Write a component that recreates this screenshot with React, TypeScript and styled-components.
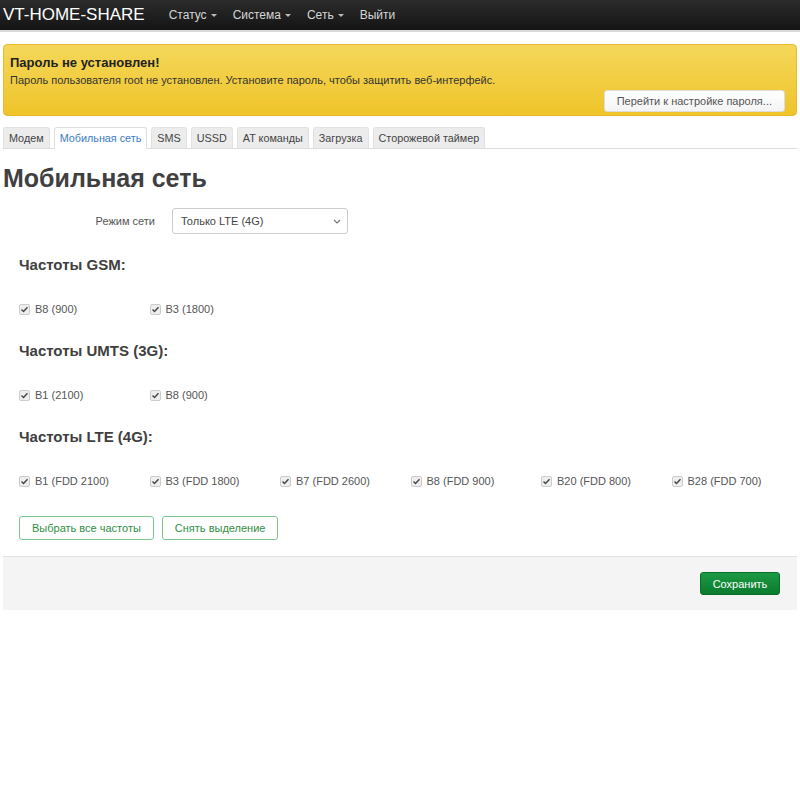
import React from "react";
import styled, { createGlobalStyle } from "styled-components";

const Global = createGlobalStyle`
  body {
    margin: 0;
    background: #fff;
    font-family: "Liberation Sans", Arial, sans-serif;
    color: #404040;
  }
`;

const Navbar = styled.div`
  height: 30px;
  background: linear-gradient(#2c2c2c, #141414);
  border-bottom: 2px solid #d8d8d8;
  display: flex;
  align-items: center;
  padding: 0 3px;
`;

const Brand = styled.span`
  font-size: 17px;
  color: #fff;
  margin-right: 24px;
`;

const Menu = styled.div`
  display: flex;
  gap: 16px;
`;

const MenuItem = styled.span<{ $drop?: boolean }>`
  font-size: 12px;
  color: #d6d6d6;
  display: flex;
  align-items: center;
  &::after {
    content: "";
    display: ${(p) => (p.$drop ? "inline-block" : "none")};
    margin-left: 4px;
    border-left: 3px solid transparent;
    border-right: 3px solid transparent;
    border-top: 3px solid #bbb;
  }
`;

const Page = styled.div`
  padding: 0 3px;
`;

const Alert = styled.div`
  margin-top: 12px;
  height: 72px;
  box-sizing: border-box;
  background: linear-gradient(#f4d75a, #efc42a);
  border: 1px solid #e6bc2a;
  border-radius: 4px;
  padding: 9px 6px 3px 6px;
  display: flex;
  flex-direction: column;
`;

const AlertTitle = styled.div`
  font-size: 13px;
  font-weight: bold;
  color: #222;
  line-height: 17px;
`;

const AlertText = styled.div`
  font-size: 11px;
  color: #333;
  margin-top: 3px;
`;

const AlertActions = styled.div`
  margin-top: auto;
  display: flex;
  justify-content: flex-end;
`;

const LightButton = styled.button`
  height: 22px;
  padding: 0 12px;
  white-space: nowrap;
  font-family: inherit;
  font-size: 11px;
  color: #555;
  background: linear-gradient(#fff, #f4f4f4);
  border: 1px solid #ddd;
  border-radius: 3px;
  margin-right: 5px;
`;

const Tabs = styled.div`
  margin-top: 11px;
  display: flex;
  gap: 4px;
  border-bottom: 1px solid #ddd;
  height: 21px;
`;

const Tab = styled.div<{ $active?: boolean }>`
  font-size: 10.8px;
  box-sizing: border-box;
  padding: 0 5px;
  display: flex;
  align-items: center;
  border: 1px solid ${(p) => (p.$active ? "#ddd" : "#e2e2e2")};
  border-bottom: ${(p) => (p.$active ? "1px solid #fff" : "none")};
  border-radius: 3px 3px 0 0;
  background: ${(p) => (p.$active ? "#fff" : "#ececec")};
  color: ${(p) => (p.$active ? "#3a7bc8" : "#444")};
  height: ${(p) => (p.$active ? "22px" : "21px")};
`;

const Title = styled.h2`
  margin: 14px 0 0 0;
  font-size: 25px;
  line-height: 30px;
  font-weight: bold;
  color: #404040;
`;

const FormRow = styled.div`
  display: flex;
  align-items: center;
  margin-top: 15px;
`;

const Label = styled.div`
  width: 152px;
  text-align: right;
  font-size: 11px;
  color: #555;
  padding-right: 17px;
`;

const Select = styled.div`
  width: 176px;
  height: 26px;
  box-sizing: border-box;
  border: 1px solid #ccc;
  border-radius: 3px;
  display: flex;
  align-items: center;
  justify-content: space-between;
  padding: 0 6px 0 8px;
  font-size: 11px;
  color: #444;
`;

const Section = styled.div`
  padding-left: 16px;
`;

const SectionTitle = styled.h3<{ $first?: boolean }>`
  margin: ${(p) => (p.$first ? "21px" : "22px")} 0 0 0;
  font-size: 15px;
  line-height: 20px;
  font-weight: bold;
  color: #404040;
`;

const Bands = styled.div`
  display: grid;
  grid-template-columns: repeat(6, 130.5px);
  margin-top: 24px;
  height: 20px;
  align-items: center;
`;

const Band = styled.label`
  display: flex;
  align-items: center;
  font-size: 11px;
  color: #555;
  gap: 5px;
`;

const Box = styled.span`
  width: 11px;
  height: 11px;
  box-sizing: border-box;
  border: 1px solid #ccc;
  border-radius: 2px;
  background: #eee;
  display: flex;
  align-items: center;
  justify-content: center;
`;

const Actions = styled.div`
  display: flex;
  gap: 8px;
  margin-top: 25px;
`;

const OutlineButton = styled.button`
  height: 24px;
  padding: 0 12px;
  font-family: inherit;
  font-size: 11px;
  color: #2f8f45;
  background: #fff;
  border: 1px solid #7cc78f;
  border-radius: 3px;
`;

const Footer = styled.div`
  margin-top: 16px;
  height: 54px;
  box-sizing: border-box;
  background: #f4f4f4;
  border-top: 1px solid #e2e2e2;
  display: flex;
  justify-content: flex-end;
  align-items: center;
  padding-right: 17px;
`;

const SaveButton = styled.button`
  width: 80px;
  height: 23px;
  font-family: inherit;
  font-size: 11px;
  color: #fff;
  background: linear-gradient(#1c9a44, #0b7a2e);
  border: 1px solid #0a6e29;
  border-radius: 3px;
`;

const Check = () => (
  <Box>
    <svg width="9" height="9" viewBox="0 0 9 9">
      <path d="M1.5 4.6 L3.5 6.5 L7.5 2.2" fill="none" stroke="#444" strokeWidth="1.4" />
    </svg>
  </Box>
);

const groups = [
  { title: "Частоты GSM:", bands: ["B8 (900)", "B3 (1800)"] },
  { title: "Частоты UMTS (3G):", bands: ["B1 (2100)", "B8 (900)"] },
  {
    title: "Частоты LTE (4G):",
    bands: ["B1 (FDD 2100)", "B3 (FDD 1800)", "B7 (FDD 2600)", "B8 (FDD 900)", "B20 (FDD 800)", "B28 (FDD 700)"],
  },
];

const tabs = ["Модем", "Мобильная сеть", "SMS", "USSD", "AT команды", "Загрузка", "Сторожевой таймер"];

export default function App() {
  return (
    <>
      <Global />
      <Navbar>
        <Brand>VT-HOME-SHARE</Brand>
        <Menu>
          <MenuItem $drop>Статус</MenuItem>
          <MenuItem $drop>Система</MenuItem>
          <MenuItem $drop>Сеть</MenuItem>
          <MenuItem>Выйти</MenuItem>
        </Menu>
      </Navbar>
      <Page>
        <Alert>
          <AlertTitle>Пароль не установлен!</AlertTitle>
          <AlertText>
            Пароль пользователя root не установлен. Установите пароль, чтобы защитить веб-интерфейс.
          </AlertText>
          <AlertActions>
            <LightButton>Перейти к настройке пароля...</LightButton>
          </AlertActions>
        </Alert>
        <Tabs>
          {tabs.map((t) => (
            <Tab key={t} $active={t === "Мобильная сеть"}>
              {t}
            </Tab>
          ))}
        </Tabs>
        <Title>Мобильная сеть</Title>
        <FormRow>
          <Label>Режим сети</Label>
          <Select>
            <span>Только LTE (4G)</span>
            <svg width="8" height="5" viewBox="0 0 8 5">
              <path d="M1 1 L4 4 L7 1" fill="none" stroke="#777" strokeWidth="1.2" />
            </svg>
          </Select>
        </FormRow>
        <Section>
          {groups.map((g, i) => (
            <div key={g.title}>
              <SectionTitle $first={i === 0}>{g.title}</SectionTitle>
              <Bands>
                {g.bands.map((b) => (
                  <Band key={b}>
                    <Check />
                    {b}
                  </Band>
                ))}
              </Bands>
            </div>
          ))}
          <Actions>
            <OutlineButton>Выбрать все частоты</OutlineButton>
            <OutlineButton>Снять выделение</OutlineButton>
          </Actions>
        </Section>
        <Footer>
          <SaveButton>Сохранить</SaveButton>
        </Footer>
      </Page>
    </>
  );
}
